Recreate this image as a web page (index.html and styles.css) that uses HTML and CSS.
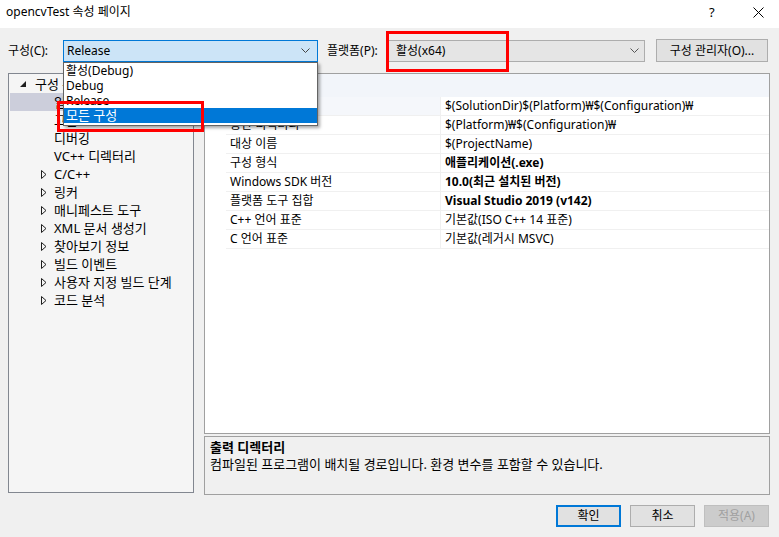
FILE: index.html
```html
<!DOCTYPE html>
<html lang="ko">
<head>
    <meta charset="UTF-8">
    <title>opencvTest 속성 페이지</title>
    <link rel="stylesheet" href="styles.css">
</head>
<body>
<div class="titlebar">
    <span class="title">opencvTest 속성 페이지</span>
    <span class="help">?</span>
    <span class="close"><svg width="11" height="11" viewBox="0 0 11 11"><path d="M0.5 0.5L10.5 10.5M10.5 0.5L0.5 10.5" stroke="#000" stroke-width="1"/></svg></span>
</div>

<div class="toolbar">
    <span class="label label-config">구성(C):</span>
    <div class="combo combo-config">
        <span>Release</span>
        <svg class="chev" width="9" height="5" viewBox="0 0 9 5"><polyline points="0.5,0.5 4.5,4.5 8.5,0.5" fill="none" stroke="#444"/></svg>
        <div class="droplist">
            <div class="dropitem">활성(Debug)</div>
            <div class="dropitem">Debug</div>
            <div class="dropitem">Release</div>
            <div class="dropitem dropitem-on">모든 구성</div>
        </div>
    </div>
    <span class="label label-platform">플랫폼(P):</span>
    <div class="combo combo-platform">
        <span>활성(x64)</span>
        <svg class="chev" width="9" height="5" viewBox="0 0 9 5"><polyline points="0.5,0.5 4.5,4.5 8.5,0.5" fill="none" stroke="#555"/></svg>
    </div>
    <div class="btn btn-manager">구성 관리자(O)...</div>
</div>

<div class="main">
    <div class="tree">
        <div class="node node-root"><svg class="tri" width="7" height="7" viewBox="0 0 7 7"><polygon points="6,0 6,6 0,6" fill="#1e1e1e"/></svg>구성 속성</div>
        <div class="node node-sel">일반</div>
        <div class="node">고급</div>
        <div class="node">디버깅</div>
        <div class="node">VC++ 디렉터리</div>
        <div class="node"><svg class="tri-c" width="6" height="9" viewBox="0 0 6 9"><polygon points="0.5,0.5 5,4.5 0.5,8.5" fill="none" stroke="#1e1e1e"/></svg>C/C++</div>
        <div class="node"><svg class="tri-c" width="6" height="9" viewBox="0 0 6 9"><polygon points="0.5,0.5 5,4.5 0.5,8.5" fill="none" stroke="#1e1e1e"/></svg>링커</div>
        <div class="node"><svg class="tri-c" width="6" height="9" viewBox="0 0 6 9"><polygon points="0.5,0.5 5,4.5 0.5,8.5" fill="none" stroke="#1e1e1e"/></svg>매니페스트 도구</div>
        <div class="node"><svg class="tri-c" width="6" height="9" viewBox="0 0 6 9"><polygon points="0.5,0.5 5,4.5 0.5,8.5" fill="none" stroke="#1e1e1e"/></svg>XML 문서 생성기</div>
        <div class="node"><svg class="tri-c" width="6" height="9" viewBox="0 0 6 9"><polygon points="0.5,0.5 5,4.5 0.5,8.5" fill="none" stroke="#1e1e1e"/></svg>찾아보기 정보</div>
        <div class="node"><svg class="tri-c" width="6" height="9" viewBox="0 0 6 9"><polygon points="0.5,0.5 5,4.5 0.5,8.5" fill="none" stroke="#1e1e1e"/></svg>빌드 이벤트</div>
        <div class="node"><svg class="tri-c" width="6" height="9" viewBox="0 0 6 9"><polygon points="0.5,0.5 5,4.5 0.5,8.5" fill="none" stroke="#1e1e1e"/></svg>사용자 지정 빌드 단계</div>
        <div class="node"><svg class="tri-c" width="6" height="9" viewBox="0 0 6 9"><polygon points="0.5,0.5 5,4.5 0.5,8.5" fill="none" stroke="#1e1e1e"/></svg>코드 분석</div>
    </div>

    <div class="right">
        <div class="grid">
            <div class="grid-head">일반</div>
            <div class="row row-sel"><div class="gutter"></div><div class="name">출력 디렉터리</div><div class="value">$(SolutionDir)$(Platform)₩$(Configuration)₩</div></div>
            <div class="row"><div class="gutter"></div><div class="name">중간 디렉터리</div><div class="value">$(Platform)₩$(Configuration)₩</div></div>
            <div class="row"><div class="gutter"></div><div class="name">대상 이름</div><div class="value">$(ProjectName)</div></div>
            <div class="row"><div class="gutter"></div><div class="name">구성 형식</div><div class="value bold">애플리케이션(.exe)</div></div>
            <div class="row"><div class="gutter"></div><div class="name">Windows SDK 버전</div><div class="value bold">10.0(최근 설치된 버전)</div></div>
            <div class="row"><div class="gutter"></div><div class="name">플랫폼 도구 집합</div><div class="value bold">Visual Studio 2019 (v142)</div></div>
            <div class="row"><div class="gutter"></div><div class="name">C++ 언어 표준</div><div class="value">기본값(ISO C++ 14 표준)</div></div>
            <div class="row"><div class="gutter"></div><div class="name">C 언어 표준</div><div class="value">기본값(레거시 MSVC)</div></div>
        </div>
        <div class="desc">
            <div class="desc-title">출력 디렉터리</div>
            <div>컴파일된 프로그램이 배치될 경로입니다. 환경 변수를 포함할 수 있습니다.</div>
        </div>
    </div>
</div>

<div class="footer">
    <div class="btn btn-ok">확인</div>
    <div class="btn">취소</div>
    <div class="btn btn-off">적용(A)</div>
</div>

<div class="mark mark-platform"></div>
<div class="mark mark-all"></div>
</body>
</html>
```

FILE: styles.css
```css
*{
    margin: 0;
    padding: 0;
    box-sizing: border-box;
}
body{
    width: 779px;
    height: 537px;
    overflow: hidden;
    position: relative;
    background: #f0f0f0;
    color: #000;
    font-family: "Noto Sans", "Noto Sans CJK KR", sans-serif;
    font-size: 12px;
    line-height: 16px;
}
.titlebar{
    height: 28px;
    background: #fff;
    display: flex;
    align-items: center;
    padding: 0 0 4px 6px;
}
.title{
    flex: 1;
}
.help{
    width: 46px;
    font-size: 13px;
    padding-left: 2px;
}
.close{
    width: 26px;
    display: flex;
    align-items: center;
}
.toolbar{
    margin-top: 11px;
    height: 23px;
    display: flex;
    align-items: center;
    padding-left: 8px;
}
.label-config{
    width: 55px;
}
.label-platform{
    width: 59px;
    margin-left: 9px;
}
.combo{
    height: 22px;
    display: flex;
    align-items: center;
    justify-content: space-between;
    position: relative;
}
.combo-config{
    width: 255px;
    background: #cce4f7;
    border: 1px solid #0078d7;
    padding: 0 7px 0 3px;
}
.combo-platform{
    width: 259px;
    background: #e5e5e5;
    border: 1px solid #adadad;
    padding: 0 5px 0 9px;
}
.droplist{
    position: absolute;
    left: -1px;
    top: 21px;
    width: 255px;
    height: 64px;
    background: #fff;
    border: 1px solid #646464;
    box-shadow: 2px 2px 3px rgba(0,0,0,0.35);
    z-index: 5;
}
.dropitem{
    height: 15px;
    line-height: 15px;
    padding-left: 2px;
}
.dropitem-on{
    background: #0078d7;
    color: #fff;
    font-size: 13px;
}
.btn{
    height: 23px;
    display: flex;
    align-items: center;
    justify-content: center;
    background: #e1e1e1;
    border: 1px solid #adadad;
}
.btn-manager{
    width: 112px;
    margin-left: 11px;
}
.main{
    margin-top: 11px;
    display: flex;
    padding-left: 8px;
}
.tree{
    width: 186px;
    height: 420px;
    background: #f5f5f5;
    border: 1px solid #828790;
    padding: 1px 0 0 1px;
    font-size: 13px;
}
.node{
    height: 18px;
    line-height: 18px;
    padding-left: 44px;
    display: flex;
    align-items: center;
    position: relative;
}
.node-root{
    padding-left: 25px;
}
.node-sel{
    background: #cccedb;
}
.tri{
    position: absolute;
    left: 10px;
    top: 6px;
}
.tri-c{
    position: absolute;
    left: 31px;
    top: 5px;
}
.right{
    margin-left: 10px;
    width: 566px;
}
.grid{
    height: 361px;
    background: #fff;
    border: 1px solid #a0a0a0;
}
.grid-head{
    height: 23px;
    line-height: 23px;
    background: #f2f5fa;
    padding-left: 20px;
}
.row{
    display: flex;
    height: 19px;
    line-height: 18px;
}
.gutter{
    width: 21px;
}
.name{
    width: 214px;
    padding-left: 4px;
    border-bottom: 1px solid #f0f0f0;
}
.value{
    flex: 1;
    padding-left: 4px;
    border-left: 1px solid #f0f0f0;
    border-bottom: 1px solid #f0f0f0;
}
.row-sel .name{
    background: #f5f7fb;
}
.bold{
    font-weight: bold;
}
.desc{
    margin-top: 2px;
    height: 59px;
    border: 1px solid #a0a0a0;
    padding: 2px 5px 0;
    line-height: 17px;
    font-size: 13px;
}
.desc-title{
    font-weight: bold;
}
.footer{
    margin-top: 10px;
    display: flex;
    justify-content: flex-end;
    padding-right: 10px;
    gap: 9px;
}
.footer .btn{
    width: 65px;
    height: 22px;
}
.btn-ok{
    border: 2px solid #0078d7;
}
.btn-off{
    background: #cccccc;
    border-color: #bfbfbf;
    color: #a0a0a0;
}
.mark{
    position: absolute;
    border: 3px solid #ff0000;
    z-index: 10;
}
.mark-platform{
    left: 386px;
    top: 31px;
    width: 123px;
    height: 41px;
}
.mark-all{
    left: 57px;
    top: 101px;
    width: 147px;
    height: 31px;
}
```
